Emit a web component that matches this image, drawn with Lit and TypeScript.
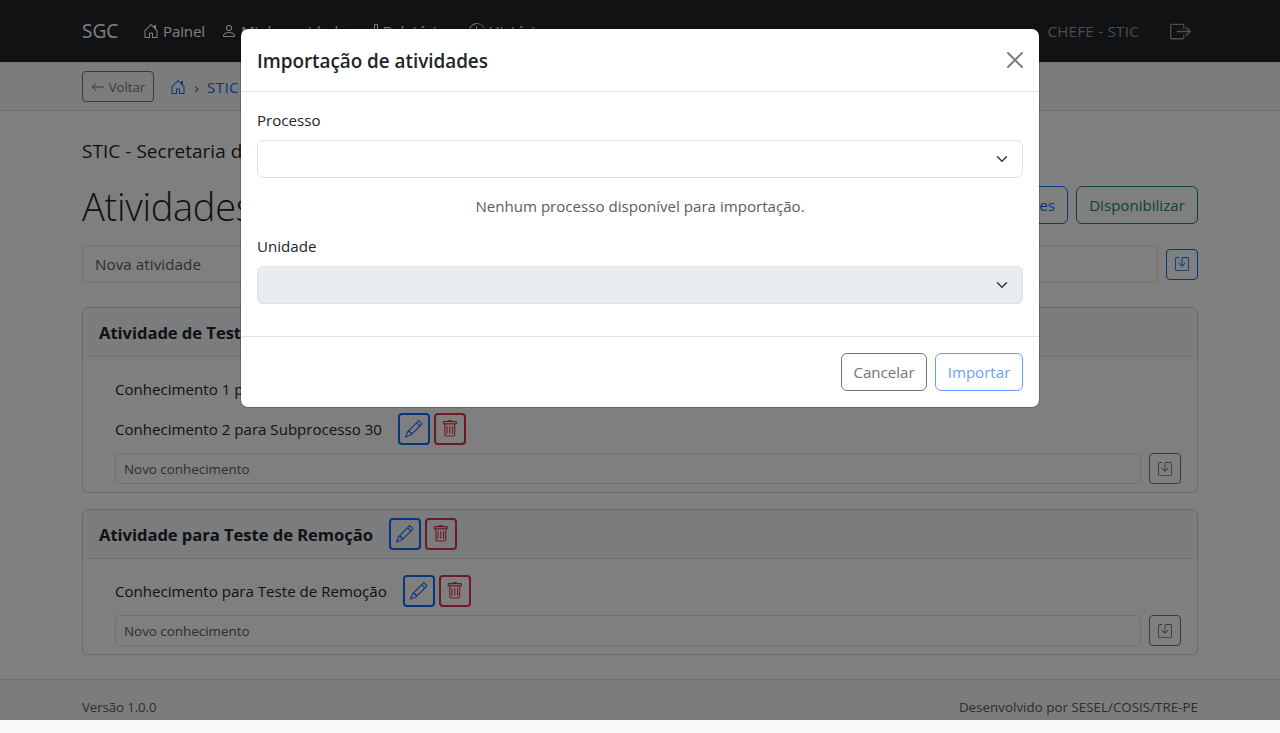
import { LitElement, html, css, svg } from "lit";
import { customElement, property } from "lit/decorators.js";

const ICONS: Record<string, string[]> = {
  house: ["M8.354 1.146a.5.5 0 0 0-.708 0l-6 6A.5.5 0 0 0 1.5 7.5v7a.5.5 0 0 0 .5.5h4.5a.5.5 0 0 0 .5-.5v-4h2v4a.5.5 0 0 0 .5.5H14a.5.5 0 0 0 .5-.5v-7a.5.5 0 0 0-.146-.354L13 5.793V2.5a.5.5 0 0 0-.5-.5h-1a.5.5 0 0 0-.5.5v1.293zM2.5 14V7.707l5.5-5.5 5.5 5.5V14H10v-4a.5.5 0 0 0-.5-.5h-3a.5.5 0 0 0-.5.5v4z"],
  person: ["M8 8a3 3 0 1 0 0-6 3 3 0 0 0 0 6m2-3a2 2 0 1 1-4 0 2 2 0 0 1 4 0m4 8c0 1-1 1-1 1H3s-1 0-1-1 1-4 6-4 6 3 6 4m-1-.004c-.001-.246-.154-.986-.832-1.664C11.516 10.68 10.289 10 8 10s-3.516.68-4.168 1.332c-.678.678-.83 1.418-.832 1.664z"],
  chart: ["M4 11H2v3h2zm5-4H7v7h2zm5-5v12h-2V2zm-2-1a1 1 0 0 0-1 1v12a1 1 0 0 0 1 1h2a1 1 0 0 0 1-1V2a1 1 0 0 0-1-1zM6 7a1 1 0 0 1 1-1h2a1 1 0 0 1 1 1v7a1 1 0 0 1-1 1H7a1 1 0 0 1-1-1zm-5 4a1 1 0 0 1 1-1h2a1 1 0 0 1 1 1v3a1 1 0 0 1-1 1H2a1 1 0 0 1-1-1z"],
  clock: [
    "M8.515 1.019A7 7 0 0 0 8 1V0a8 8 0 0 1 .589.022zm2.004.45a7 7 0 0 0-.985-.299l.219-.976q.576.129 1.126.342zm1.37.71a7 7 0 0 0-.439-.27l.493-.87a8 8 0 0 1 .979.654l-.615.789a7 7 0 0 0-.418-.302zm1.834 1.79a7 7 0 0 0-.653-.796l.724-.69q.406.429.747.91zm.744 1.352a7 7 0 0 0-.214-.468l.893-.45a8 8 0 0 1 .45 1.088l-.95.313a7 7 0 0 0-.179-.483m.53 2.507a7 7 0 0 0-.1-1.025l.985-.17q.1.58.116 1.17zm-.131 1.538q.05-.254.081-.51l.993.123a8 8 0 0 1-.23 1.155l-.964-.267q.069-.247.12-.501m-.952 2.379q.276-.436.486-.908l.914.405q-.24.54-.555 1.038zm-.964 1.205q.183-.183.35-.378l.758.653a8 8 0 0 1-.401.432z",
    "M8 1a7 7 0 1 0 4.95 11.95l.707.707A8.001 8.001 0 1 1 8 0z",
    "M7.5 3a.5.5 0 0 1 .5.5v5.21l3.248 1.856a.5.5 0 0 1-.496.868l-3.5-2A.5.5 0 0 1 7 9V3.5a.5.5 0 0 1 .5-.5",
  ],
  logout: [
    "M10 12.5a.5.5 0 0 1-.5.5h-8a.5.5 0 0 1-.5-.5v-9a.5.5 0 0 1 .5-.5h8a.5.5 0 0 1 .5.5v2a.5.5 0 0 0 1 0v-2A1.5 1.5 0 0 0 9.5 2h-8A1.5 1.5 0 0 0 0 3.5v9A1.5 1.5 0 0 0 1.5 14h8a1.5 1.5 0 0 0 1.5-1.5v-2a.5.5 0 0 0-1 0z",
    "M15.854 8.354a.5.5 0 0 0 0-.708l-3-3a.5.5 0 0 0-.708.708L14.293 7.5H5.5a.5.5 0 0 0 0 1h8.793l-2.147 2.146a.5.5 0 0 0 .708.708z",
  ],
  back: ["M15 8a.5.5 0 0 0-.5-.5H2.707l3.147-3.146a.5.5 0 1 0-.708-.708l-4 4a.5.5 0 0 0 0 .708l4 4a.5.5 0 0 0 .708-.708L2.707 8.5H14.5A.5.5 0 0 0 15 8"],
  save: ["M2 1a1 1 0 0 0-1 1v12a1 1 0 0 0 1 1h12a1 1 0 0 0 1-1V2a1 1 0 0 0-1-1H9.5a1 1 0 0 0-1 1v7.293l2.646-2.647a.5.5 0 0 1 .708.708l-3.5 3.5a.5.5 0 0 1-.708 0l-3.5-3.5a.5.5 0 1 1 .708-.708L7.5 9.293V2a2 2 0 0 1 2-2H14a2 2 0 0 1 2 2v12a2 2 0 0 1-2 2H2a2 2 0 0 1-2-2V2a2 2 0 0 1 2-2h2.5a.5.5 0 0 1 0 1z"],
  pencil: ["M12.146.146a.5.5 0 0 1 .708 0l3 3a.5.5 0 0 1 0 .708l-10 10a.5.5 0 0 1-.168.11l-5 2a.5.5 0 0 1-.65-.65l2-5a.5.5 0 0 1 .11-.168zM11.207 2.5 13.5 4.793 14.793 3.5 12.5 1.207zm1.586 3L10.5 3.207 4 9.707V10h.5a.5.5 0 0 1 .5.5v.5h.5a.5.5 0 0 1 .5.5v.5h.293zm-9.761 5.175-.106.106-1.528 3.821 3.821-1.528.106-.106A.5.5 0 0 1 5 12.5V12h-.5a.5.5 0 0 1-.5-.5V11h-.5a.5.5 0 0 1-.468-.325"],
  trash: [
    "M5.5 5.5A.5.5 0 0 1 6 6v6a.5.5 0 0 1-1 0V6a.5.5 0 0 1 .5-.5m2.5 0a.5.5 0 0 1 .5.5v6a.5.5 0 0 1-1 0V6a.5.5 0 0 1 .5-.5m3 .5a.5.5 0 0 0-1 0v6a.5.5 0 0 0 1 0z",
    "M14.5 3a1 1 0 0 1-1 1H13v9a2 2 0 0 1-2 2H5a2 2 0 0 1-2-2V4h-.5a1 1 0 0 1-1-1V2a1 1 0 0 1 1-1H6a1 1 0 0 1 1-1h2a1 1 0 0 1 1 1h3.5a1 1 0 0 1 1 1zM4.118 4 4 4.059V13a1 1 0 0 0 1 1h6a1 1 0 0 0 1-1V4.059L11.882 4zM2.5 3h11V2h-11z",
  ],
  close: ["M.293.293a1 1 0 0 1 1.414 0L8 6.586 14.293.293a1 1 0 1 1 1.414 1.414L9.414 8l6.293 6.293a1 1 0 0 1-1.414 1.414L8 9.414l-6.293 6.293a1 1 0 0 1-1.414-1.414L6.586 8 .293 1.707a1 1 0 0 1 0-1.414"],
};

const icon = (name: string, cls = "") => html`<svg class="icon ${cls}" viewBox="0 0 16 16" fill="currentColor" aria-hidden="true">
  ${ICONS[name].map((d) => svg`<path fill-rule="evenodd" d=${d}></path>`)}
</svg>`;

const base = css`
  * { box-sizing: border-box; }
  .icon { width: 16px; height: 16px; flex: none; display: block; }
  .sm { width: 14px; height: 14px; }
  .md { width: 17.6px; height: 17.6px; }
  .lg { width: 21px; height: 21px; }
  button {
    font: inherit; line-height: 24px; background: transparent; padding: 0; margin: 0;
    border: 1px solid currentColor; border-radius: 6px; height: 38px;
    display: flex; align-items: center; justify-content: center; flex: none; white-space: nowrap;
  }
  .primary { color: #0d6efd; }
  .secondary { color: #6c757d; }
  .success { color: #198754; }
  .danger { color: #dc3545; }
  .mini { width: 32px; height: 31px; border-radius: 4px; }
  .edit { width: 32px; height: 32px; border-width: 2px; border-radius: 4px; }
  .field {
    border: 1px solid #dee2e6; border-radius: 6px; height: 38px; padding: 0 12px;
    display: flex; align-items: center; color: #595c5f; flex: 1;
  }
`;

@customElement("atividade-card")
class AtividadeCard extends LitElement {
  @property() titulo = "";
  @property({ attribute: false }) itens: string[] = [];

  static styles = [base, css`
    :host { display: block; border: 1px solid rgba(0, 0, 0, 0.175); border-radius: 6px; padding: 0 4px 8px; }
    .head {
      display: flex; align-items: center; height: 49px; padding: 0 12px 0 12px;
      background: #f6f8fa; border-bottom: 1px solid #dee5ea; margin-bottom: 16px;
    }
    .title { font-size: 16.6px; font-weight: 700; letter-spacing: -0.05px; margin-right: 16px; padding-top: 2px; white-space: nowrap; }
    .actions { display: flex; gap: 4px; }
    .row { display: flex; align-items: center; height: 32px; margin: 0 28px 8px; }
    .name { margin-right: 16px; white-space: nowrap; }
    .new { display: flex; gap: 8px; margin: 0 12px 0 28px; }
    .small { height: 31px; border-radius: 4px; padding: 0 8px; font-size: 13.4px; }
  `];

  private acoes() {
    return html`<div class="actions">
      <button class="edit primary" aria-label="Editar">${icon("pencil", "md")}</button>
      <button class="edit danger" aria-label="Remover">${icon("trash", "md")}</button>
    </div>`;
  }

  render() {
    return html`
      <div class="head"><span class="title">${this.titulo}</span>${this.acoes()}</div>
      ${this.itens.map((i) => html`<div class="row"><span class="name">${i}</span>${this.acoes()}</div>`)}
      <div class="new">
        <div class="field small">Novo conhecimento</div>
        <button class="mini secondary" aria-label="Salvar">${icon("save", "sm")}</button>
      </div>`;
  }
}

@customElement("importar-modal")
class ImportarModal extends LitElement {
  static styles = [base, css`
    :host {
      position: absolute; top: 0; left: 0; width: 100%; height: 720px;
      background: rgba(0, 0, 0, 0.5); display: flex; justify-content: center; align-items: flex-start; padding-top: 28px;
    }
    .dialog {
      width: 800px; background: #fff; background-clip: padding-box;
      border: 1px solid rgba(0, 0, 0, 0.175); border-radius: 8px;
    }
    .head { display: flex; align-items: center; justify-content: space-between; height: 63px; padding: 0 16px; border-bottom: 1px solid #dee2e6; }
    .title { font-size: 18.9px; font-weight: 600; line-height: 30px; letter-spacing: -0.03px; padding-top: 2px; }
    .close { opacity: 0.5; color: #000; }
    .body { padding: 16px; }
    .group { margin-bottom: 16px; }
    .label { margin-bottom: 8px; }
    .arrow { width: 16px; height: 12px; margin-left: auto; }
    .disabled { background: #e9ecef; }
    .hint { margin-top: 16px; text-align: center; color: #595c5f; }
    .foot { display: flex; justify-content: flex-end; gap: 8px; padding: 16px; border-top: 1px solid #dee2e6; }
    .cancel { width: 86px; }
    .import { width: 88px; opacity: 0.65; }
  `];

  private seta() {
    return html`<svg class="arrow" viewBox="0 0 16 16"><path fill="none" stroke="#343a40" stroke-linecap="round" stroke-linejoin="round" stroke-width="2" d="m2 5 6 6 6-6"></path></svg>`;
  }

  render() {
    return html`<div class="dialog" role="dialog">
      <div class="head"><span class="title">Importação de atividades</span>${icon("close", "close")}</div>
      <div class="body">
        <div class="group">
          <div class="label">Processo</div>
          <div class="field">${this.seta()}</div>
          <div class="hint">Nenhum processo disponível para importação.</div>
        </div>
        <div class="group">
          <div class="label">Unidade</div>
          <div class="field disabled">${this.seta()}</div>
        </div>
      </div>
      <div class="foot">
        <button class="cancel secondary">Cancelar</button>
        <button class="import primary" disabled>Importar</button>
      </div>
    </div>`;
  }
}

@customElement("app-root")
class AppRoot extends LitElement {
  static styles = [base, css`
    :host {
      display: block; position: relative; height: 733px; overflow: hidden; background: #fff; color: #212529;
      font-family: "Open Sans", "Noto Sans", sans-serif; font-size: 15.1px; line-height: 24px;
    }
    .page { display: flex; flex-direction: column; height: 733px; }
    .container { width: 1116px; margin: 0 auto; display: flex; align-items: center; }
    .navbar { background: #212529; height: 62px; display: flex; color: #fff; }
    .brand { font-size: 19.1px; width: 61px; }
    .links { display: flex; gap: 16px; flex: 1; }
    .link { display: flex; align-items: center; gap: 4px; white-space: nowrap; }
    .painel { letter-spacing: -0.15px; }
    .relatorios { letter-spacing: -0.1px; }
    .user { display: flex; align-items: center; color: rgba(255, 255, 255, 0.55); letter-spacing: 0.28px; gap: 31px; padding-right: 7px; }
    .crumbs { background: #f8f9fa; height: 49px; border: solid #dee2e6; border-width: 1px 0; display: flex; }
    .back { width: 72px; height: 31px; border-radius: 4px; font-size: 13.2px; gap: 4px; margin-right: 16px; }
    .sep { width: 21px; text-align: center; color: #595c5f; }
    .stic { letter-spacing: 0.4px; }
    main { width: 1116px; margin: 0 auto; padding-top: 25px; flex: 1; }
    .unit { font-size: 18.9px; line-height: 30px; letter-spacing: 0.08px; margin-bottom: 15px; }
    .heading { display: flex; align-items: center; gap: 8px; height: 48px; margin-bottom: 16px; }
    h1 { margin: 0; padding-top: 2px; flex: 1; font-size: 38px; font-weight: 300; line-height: 48px; letter-spacing: -0.3px; white-space: nowrap; }
    .wide { padding: 0 12px; }
    .disp { width: 122px; }
    .add { display: flex; align-items: center; gap: 8px; margin-bottom: 24px; }
    .nova { letter-spacing: 0.1px; }
    .cards { display: flex; flex-direction: column; gap: 16px; }
    footer { height: 54px; background: #f8f9fa; border-top: 1px solid #dee2e6; display: flex; color: #595c5f; font-size: 13.3px; }
    .foot { justify-content: space-between; }
    .ver { letter-spacing: -0.12px; }
    .dev { letter-spacing: 0.05px; }
  `];

  render() {
    return html`
      <div class="page">
        <nav class="navbar"><div class="container">
          <span class="brand">SGC</span>
          <div class="links">
            <span class="link painel">${icon("house")}Painel</span>
            <span class="link">${icon("person")}Minha unidade</span>
            <span class="link relatorios">${icon("chart")}Relatórios</span>
            <span class="link">${icon("clock")}Histórico</span>
          </div>
          <div class="user"><span>CHEFE - STIC</span>${icon("logout", "lg")}</div>
        </div></nav>
        <div class="crumbs"><div class="container">
          <button class="back secondary">${icon("back", "sm")}Voltar</button>
          <span class="primary">${icon("house")}</span>
          <span class="sep">›</span>
          <span class="primary stic">STIC</span>
        </div></div>
        <main>
          <div class="unit">STIC - Secretaria de</div>
          <div class="heading">
            <h1>Atividades</h1>
            <button class="wide primary">Importar atividades</button>
            <button class="disp success">Disponibilizar</button>
          </div>
          <div class="add">
            <div class="field nova">Nova atividade</div>
            <button class="mini primary" aria-label="Adicionar">${icon("save", "sm")}</button>
          </div>
          <div class="cards">
            <atividade-card .titulo=${"Atividade de Teste"} .itens=${["Conhecimento 1 para Subprocesso 30", "Conhecimento 2 para Subprocesso 30"]}></atividade-card>
            <atividade-card .titulo=${"Atividade para Teste de Remoção"} .itens=${["Conhecimento para Teste de Remoção"]}></atividade-card>
          </div>
        </main>
        <footer><div class="container foot"><span class="ver">Versão 1.0.0</span><span class="dev">Desenvolvido por SESEL/COSIS/TRE-PE</span></div></footer>
      </div>
      <importar-modal></importar-modal>`;
  }
}
